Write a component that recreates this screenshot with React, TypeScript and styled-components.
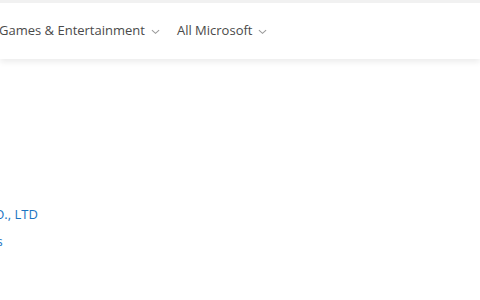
import styled, { createGlobalStyle } from "styled-components";

const Global = createGlobalStyle`
  html, body {
    margin: 0;
    padding: 0;
    background: #ffffff;
    overflow: hidden;
    font-family: "Open Sans", "Liberation Sans", sans-serif;
  }
`;

const Page = styled.div`
  width: 480px;
  height: 300px;
  overflow: hidden;
  box-sizing: border-box;
  border-top: 3px solid #f1f1f1;
`;

const Header = styled.header`
  height: 54px;
  display: flex;
  align-items: center;
  background: #fff;
  box-shadow: 0 3px 6px rgba(0, 0, 0, 0.08);
  padding-bottom: 2px;
`;

const Nav = styled.nav`
  display: flex;
  align-items: center;
  gap: 17px;
  margin-left: -1px;
`;

const NavItem = styled.div`
  display: flex;
  align-items: center;
  gap: 6px;
  font-size: 13px;
  color: #4a4a4a;
  white-space: nowrap;
`;

const Chevron = styled.svg`
  width: 9px;
  height: 9px;
  margin-top: 3px;
  stroke: #9a9a9a;
  fill: none;
  stroke-width: 1.2;
`;

const Body = styled.main`
  padding-top: 146px;
  margin-left: -14px;
  display: flex;
  flex-direction: column;
  gap: 9px;
`;

const Link = styled.a`
  font-size: 13px;
  color: #1a74c2;
  text-decoration: none;
  white-space: nowrap;
`;

function Down() {
  return (
    <Chevron viewBox="0 0 10 10">
      <path d="M1 3.5 L5 7 L9 3.5" />
    </Chevron>
  );
}

export default function App() {
  return (
    <Page>
      <Global />
      <Header>
        <Nav>
          <NavItem>
            Games &amp; Entertainment <Down />
          </NavItem>
          <NavItem>
            All Microsoft <Down />
          </NavItem>
        </Nav>
      </Header>
      <Body>
        <Link>CO., LTD</Link>
        <Link>ies</Link>
      </Body>
    </Page>
  );
}
